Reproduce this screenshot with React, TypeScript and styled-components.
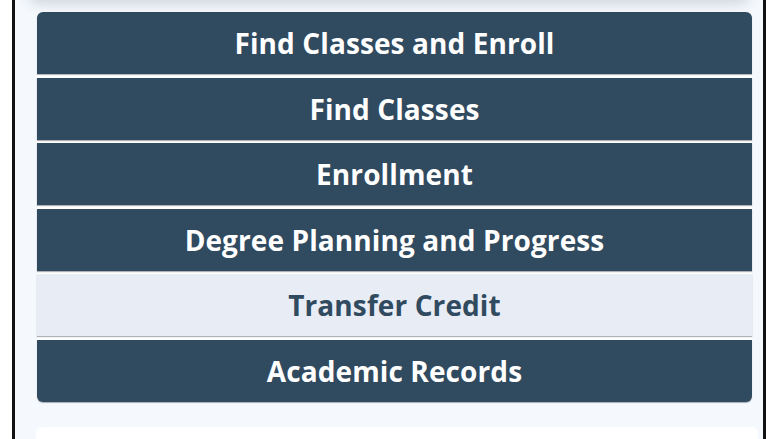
import React from 'react';
import styled, { createGlobalStyle } from 'styled-components';

const GlobalStyle = createGlobalStyle`
  html, body {
    margin: 0;
    padding: 0;
    background: #ffffff;
    overflow: hidden;
  }
  body {
    font-family: "Open Sans", "Liberation Sans", sans-serif;
  }
`;

const Frame = styled.div`
  margin-left: 12px;
  width: 748px;
  height: 439px;
  border-left: 3px solid #111;
  border-right: 3px solid #111;
  background: #f5f9fd;
  overflow: hidden;
`;

const PrevCard = styled.div`
  height: 20px;
  margin: -20px 14px 0 14px;
  background: #ffffff;
  border-radius: 8px;
  box-shadow: 0 3px 14px rgba(40, 50, 70, 0.2);
`;

const Menu = styled.nav`
  display: flex;
  flex-direction: column;
  gap: 3.5px;
  margin: 12px 11px 0 22px;
  background: #ffffff;
  border-radius: 6px;
`;

const Item = styled.a<{ $active?: boolean }>`
  display: flex;
  align-items: center;
  justify-content: center;
  height: 62px;
  background: ${p => (p.$active ? '#e8ecf4' : '#304a5f')};
  color: ${p => (p.$active ? '#304a5f' : '#ffffff')};
  font-size: 28px;
  font-weight: 700;
  letter-spacing: 0.1px;
  text-decoration: none;
  box-shadow: 0 1px 1px rgba(20, 30, 45, 0.35);

  &:first-child {
    border-radius: 6px 6px 0 0;
  }
  &:last-child {
    border-radius: 0 0 6px 6px;
  }
`;

const NextCard = styled.div`
  height: 40px;
  margin: 25px 5px 0 21px;
  background: #ffffff;
  border-radius: 6px;
`;

const items = [
  'Find Classes and Enroll',
  'Find Classes',
  'Enrollment',
  'Degree Planning and Progress',
  'Transfer Credit',
  'Academic Records',
];

export default function App() {
  return (
    <>
      <GlobalStyle />
      <Frame>
        <PrevCard />
        <Menu>
          {items.map(label => (
            <Item key={label} href="#" $active={label === 'Transfer Credit'}>
              {label}
            </Item>
          ))}
        </Menu>
        <NextCard />
      </Frame>
    </>
  );
}
